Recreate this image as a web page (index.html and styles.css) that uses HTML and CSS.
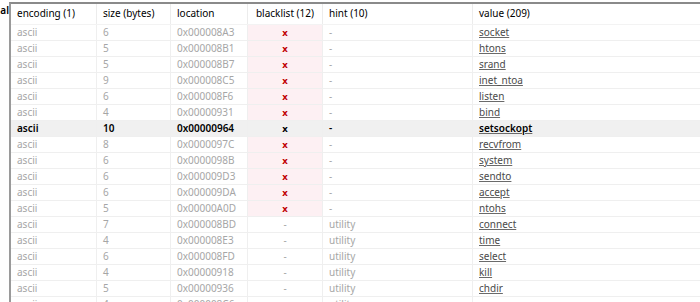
FILE: index.html
```html
<!DOCTYPE html>
<html>
<head>
<meta charset="utf-8">
<link rel="stylesheet" href="styles.css">
</head>
<body>
<div class="app">
  <div class="side"><span>al</span></div>
  <div class="table">
    <div class="row head">
      <div class="c">encoding (1)</div>
      <div class="c">size (bytes)</div>
      <div class="c">location</div>
      <div class="c center">blacklist (12)</div>
      <div class="c">hint (10)</div>
      <div class="c">value (209)</div>
    </div>
    <div class="row bl"><div class="c">ascii</div><div class="c">6</div><div class="c">0x000008A3</div><div class="c center flag"><b>x</b></div><div class="c">-</div><div class="c val"><u>socket</u></div></div>
    <div class="row bl"><div class="c">ascii</div><div class="c">5</div><div class="c">0x000008B1</div><div class="c center flag"><b>x</b></div><div class="c">-</div><div class="c val"><u>htons</u></div></div>
    <div class="row bl"><div class="c">ascii</div><div class="c">5</div><div class="c">0x000008B7</div><div class="c center flag"><b>x</b></div><div class="c">-</div><div class="c val"><u>srand</u></div></div>
    <div class="row bl"><div class="c">ascii</div><div class="c">9</div><div class="c">0x000008C5</div><div class="c center flag"><b>x</b></div><div class="c">-</div><div class="c val"><u>inet_ntoa</u></div></div>
    <div class="row bl"><div class="c">ascii</div><div class="c">6</div><div class="c">0x000008F6</div><div class="c center flag"><b>x</b></div><div class="c">-</div><div class="c val"><u>listen</u></div></div>
    <div class="row bl"><div class="c">ascii</div><div class="c">4</div><div class="c">0x00000931</div><div class="c center flag"><b>x</b></div><div class="c">-</div><div class="c val"><u>bind</u></div></div>
    <div class="row sel"><div class="c">ascii</div><div class="c">10</div><div class="c">0x00000964</div><div class="c center flag"><b>x</b></div><div class="c">-</div><div class="c val"><u>setsockopt</u></div></div>
    <div class="row bl"><div class="c">ascii</div><div class="c">8</div><div class="c">0x0000097C</div><div class="c center flag"><b>x</b></div><div class="c">-</div><div class="c val"><u>recvfrom</u></div></div>
    <div class="row bl"><div class="c">ascii</div><div class="c">6</div><div class="c">0x0000098B</div><div class="c center flag"><b>x</b></div><div class="c">-</div><div class="c val"><u>system</u></div></div>
    <div class="row bl"><div class="c">ascii</div><div class="c">6</div><div class="c">0x000009D3</div><div class="c center flag"><b>x</b></div><div class="c">-</div><div class="c val"><u>sendto</u></div></div>
    <div class="row bl"><div class="c">ascii</div><div class="c">6</div><div class="c">0x000009DA</div><div class="c center flag"><b>x</b></div><div class="c">-</div><div class="c val"><u>accept</u></div></div>
    <div class="row bl"><div class="c">ascii</div><div class="c">5</div><div class="c">0x00000A0D</div><div class="c center flag"><b>x</b></div><div class="c">-</div><div class="c val"><u>ntohs</u></div></div>
    <div class="row"><div class="c">ascii</div><div class="c">7</div><div class="c">0x000008BD</div><div class="c center">-</div><div class="c">utility</div><div class="c val"><u>connect</u></div></div>
    <div class="row"><div class="c">ascii</div><div class="c">4</div><div class="c">0x000008E3</div><div class="c center">-</div><div class="c">utility</div><div class="c val"><u>time</u></div></div>
    <div class="row"><div class="c">ascii</div><div class="c">6</div><div class="c">0x000008FD</div><div class="c center">-</div><div class="c">utility</div><div class="c val"><u>select</u></div></div>
    <div class="row"><div class="c">ascii</div><div class="c">4</div><div class="c">0x00000918</div><div class="c center">-</div><div class="c">utility</div><div class="c val"><u>kill</u></div></div>
    <div class="row"><div class="c">ascii</div><div class="c">5</div><div class="c">0x00000936</div><div class="c center">-</div><div class="c">utility</div><div class="c val"><u>chdir</u></div></div>
    <div class="row"><div class="c">ascii</div><div class="c">4</div><div class="c">0x000008C6</div><div class="c center">-</div><div class="c">utility</div><div class="c val"></div></div>
  </div>
</div>
</body>
</html>
```
FILE: styles.css
```css
html, body {
  margin: 0;
  padding: 0;
  background: #ffffff;
  overflow: hidden;
}
.app {
  display: flex;
  height: 302px;
  padding-top: 2px;
  font-family: "Noto Sans", "Open Sans", sans-serif;
  font-size: 10px;
  box-sizing: border-box;
}
.side {
  width: 9px;
  overflow: hidden;
  display: flex;
  justify-content: flex-end;
  color: #000;
  line-height: 16px;
  font-weight: 600;
}
.side span {
  white-space: nowrap;
}
.table {
  flex: 1;
  border-top: 2px solid #8a8a8a;
  border-left: 2px solid #9a9a9a;
  overflow: hidden;
}
.row {
  display: grid;
  grid-template-columns: 85px 74px 77px 75px 150px 1fr;
  height: 16px;
  border-bottom: 1px solid #efefef;
  box-sizing: border-box;
  color: #a6a6a6;
}
.row.head {
  height: 21px;
  color: #000;
  border-bottom: 1px solid #f3f3f3;
}
.c {
  padding-left: 6px;
  line-height: 15px;
  white-space: nowrap;
  overflow: hidden;
  border-left: 1px solid #efefef;
}
.c:first-child {
  border-left: none;
}
.head .c {
  line-height: 19px;
  border-left-color: #ececec;
}
.center {
  text-align: center;
  padding-left: 0;
}
.bl .flag {
  background: #fdf0f3;
}
.flag b {
  color: #c00000;
  font-weight: 700;
  font-size: 9.5px;
}
.val {
  color: #4a4a4a;
}
.val u {
  text-decoration-color: #6a6a6a;
}
.row.sel {
  background: #f0f0f0;
  color: #000;
  font-weight: 600;
}
.sel .flag {
  background: #f0f0f0;
}
.sel .flag b {
  color: #000;
}
.sel .val {
  color: #000;
}
```
